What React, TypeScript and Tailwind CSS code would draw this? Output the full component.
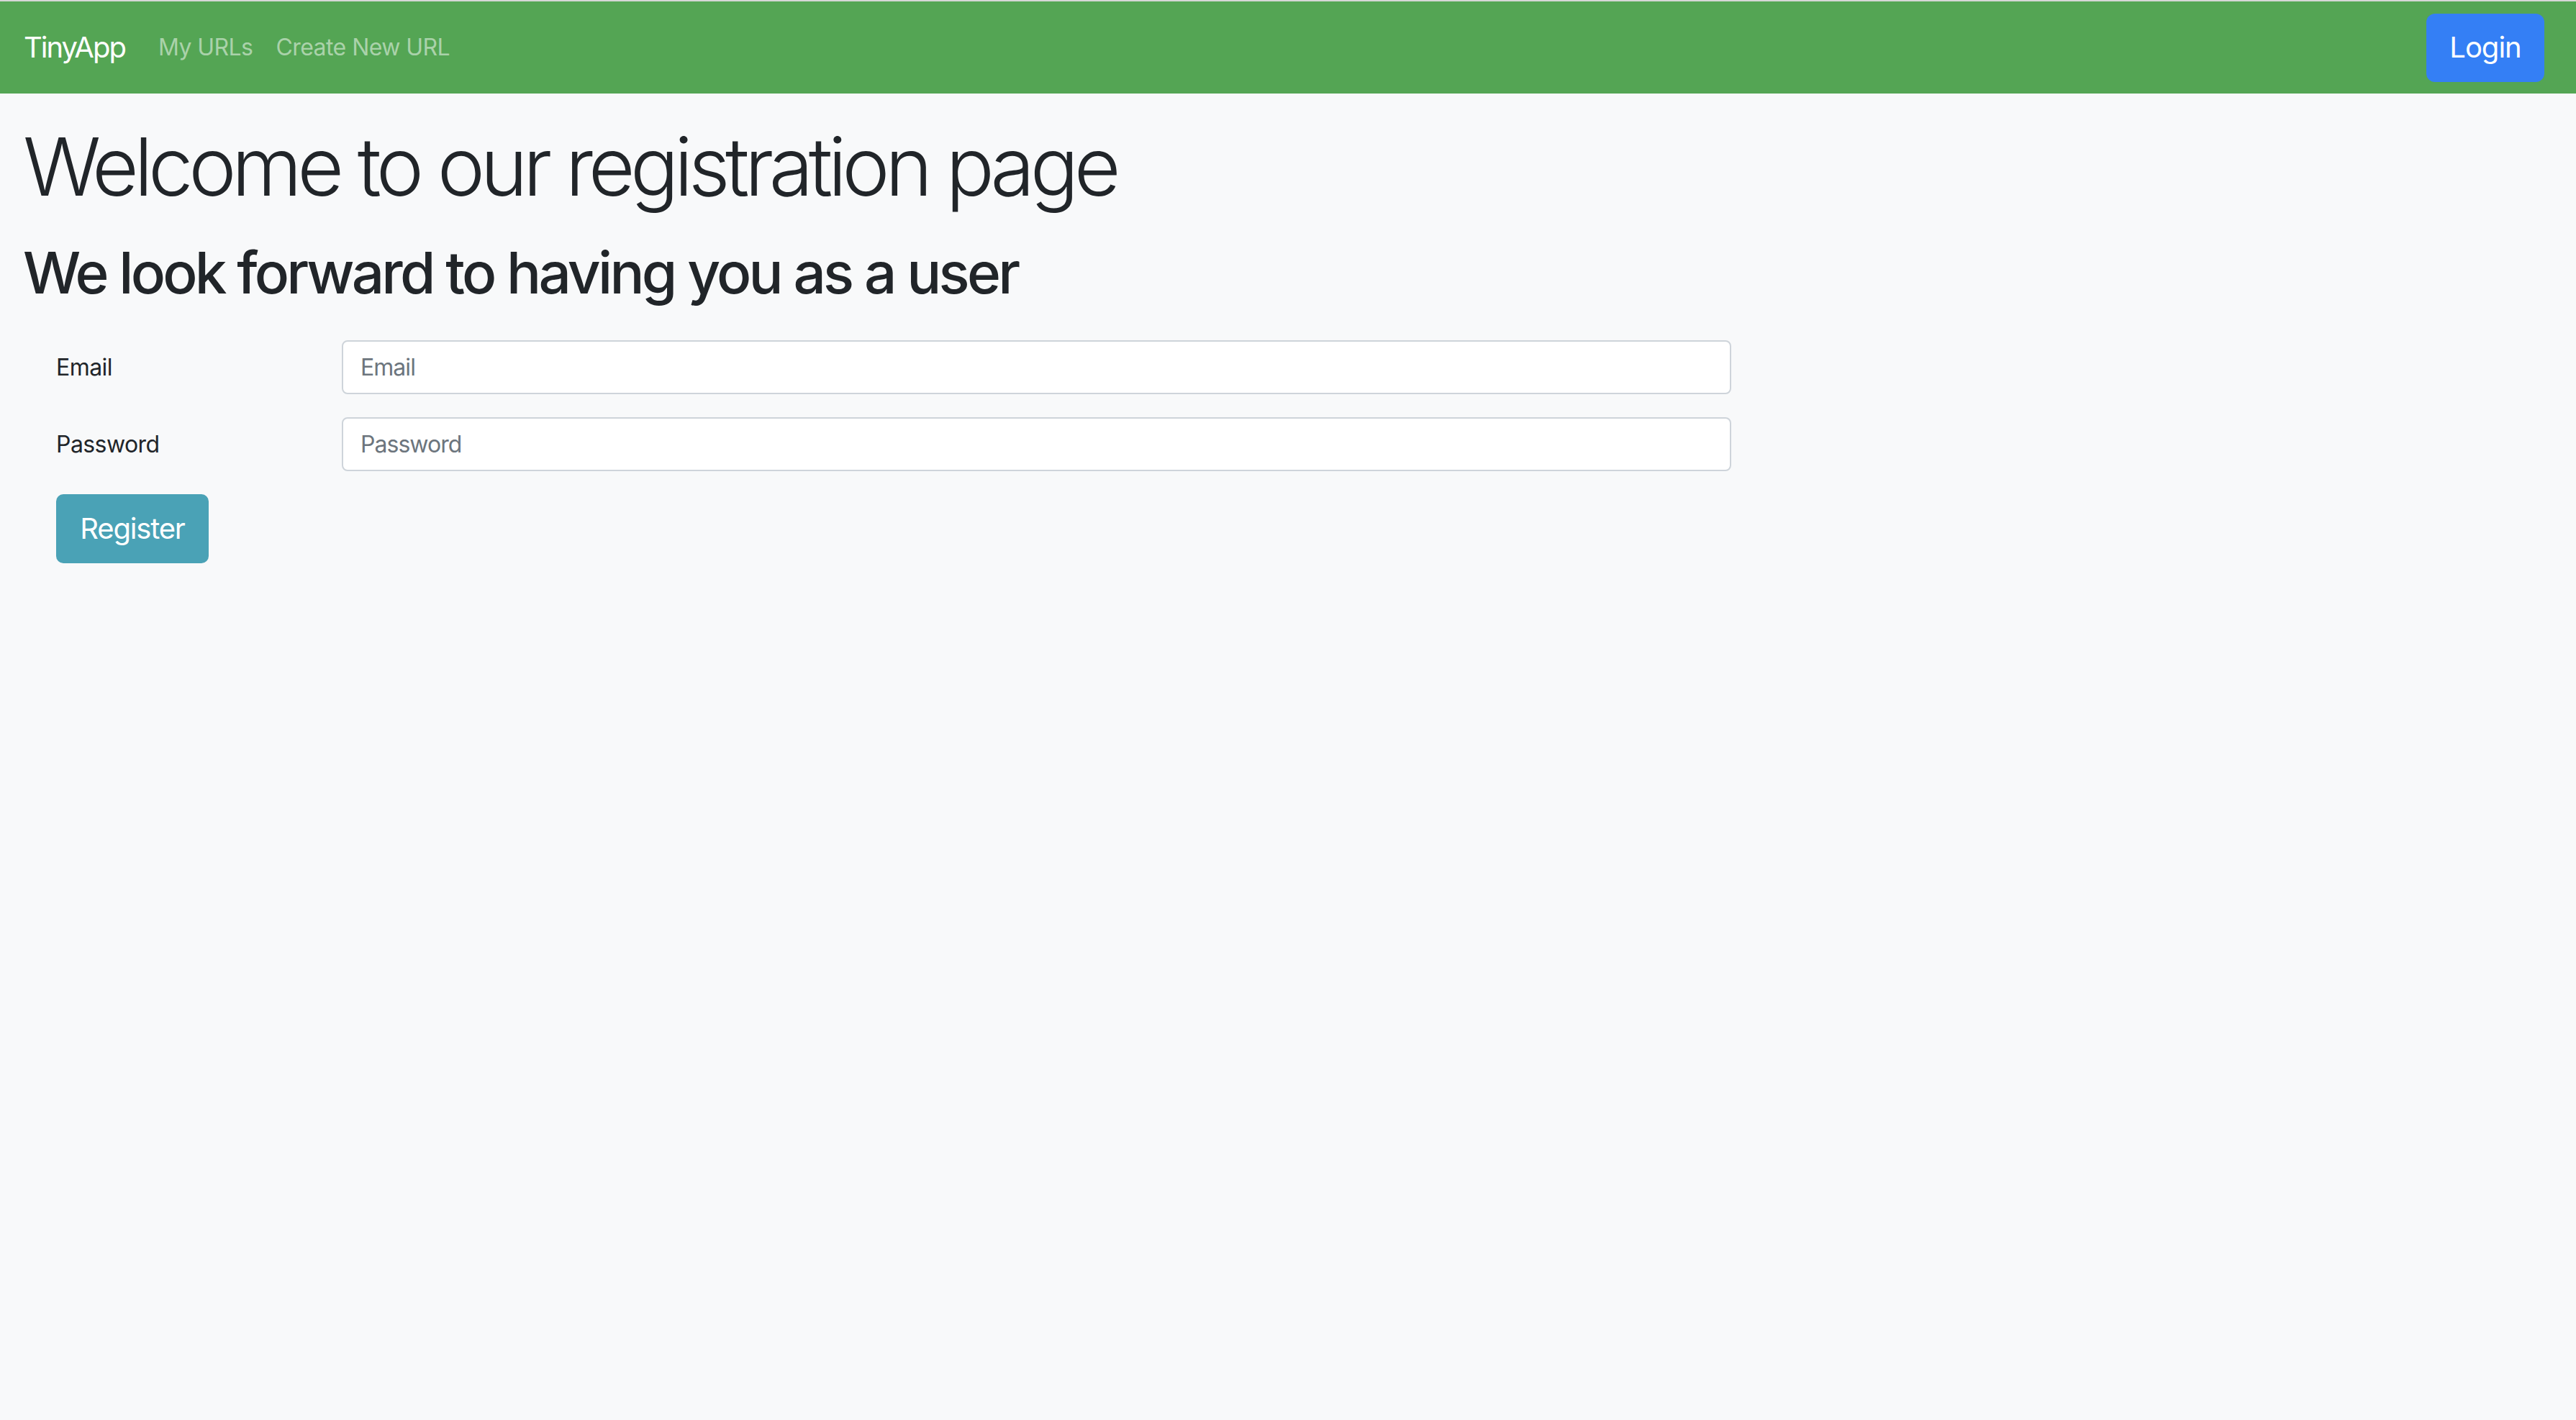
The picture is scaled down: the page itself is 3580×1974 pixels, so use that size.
import React from "react";

export default function App() {
  const font = { fontFamily: "Inter, 'Noto Sans', 'Liberation Sans', sans-serif" };
  return (
    <div className="min-h-[1974px] w-full bg-[#f8f9fa] text-[#212529]" style={font}>
      <div className="h-[2px] bg-[#d6d6d6]" />
      <nav className="flex h-[128px] items-center justify-between bg-[#54a554] pl-[33px] pr-[44px]">
        <div className="flex items-center tracking-[-0.035em]">
          <a className="mr-[30px] text-[40px] leading-[60px] tracking-[-0.05em] text-white">TinyApp</a>
          <a className="px-[16px] text-[32px] leading-[48px] text-[#aad2aa]">My URLs</a>
          <a className="px-[16px] text-[32px] leading-[48px] text-[#aad2aa]">Create New URL</a>
        </div>
        <button className="h-[95px] w-[164px] rounded-[12px] bg-[#347ff5] text-[40px] tracking-[-0.025em] text-white">
          Login
        </button>
      </nav>
      <main className="pl-[32px] pt-[34px]">
        <h1 className="text-[112px] font-light leading-[134px] tracking-[-0.058em]">
          Welcome to our registration page
        </h1>
        <h2 className="mt-[33px] text-[80px] font-medium leading-[96px] tracking-[-0.047em]">
          We look forward to having you as a user
        </h2>
        <form className="mt-[46px] pl-[46px] tracking-[-0.035em]">
          <div className="flex items-center">
            <label className="w-[397px] text-[32px]">Email</label>
            <input
              className="h-[75px] w-[1931px] rounded-[8px] border-2 border-[#ced4da] bg-white px-[24px] text-[32px] tracking-[-0.03em] placeholder:text-[#6c757d]"
              placeholder="Email"
            />
          </div>
          <div className="mt-[32px] flex items-center">
            <label className="w-[397px] text-[32px]">Password</label>
            <input
              type="password"
              className="h-[75px] w-[1931px] rounded-[8px] border-2 border-[#ced4da] bg-white px-[24px] text-[32px] tracking-[-0.03em] placeholder:text-[#6c757d]"
              placeholder="Password"
            />
          </div>
          <button
            type="button"
            className="mt-[32px] h-[96px] w-[212px] rounded-[10px] bg-[#4aa2b6] text-[40px] tracking-[-0.03em] text-white"
          >
            Register
          </button>
        </form>
      </main>
    </div>
  );
}
